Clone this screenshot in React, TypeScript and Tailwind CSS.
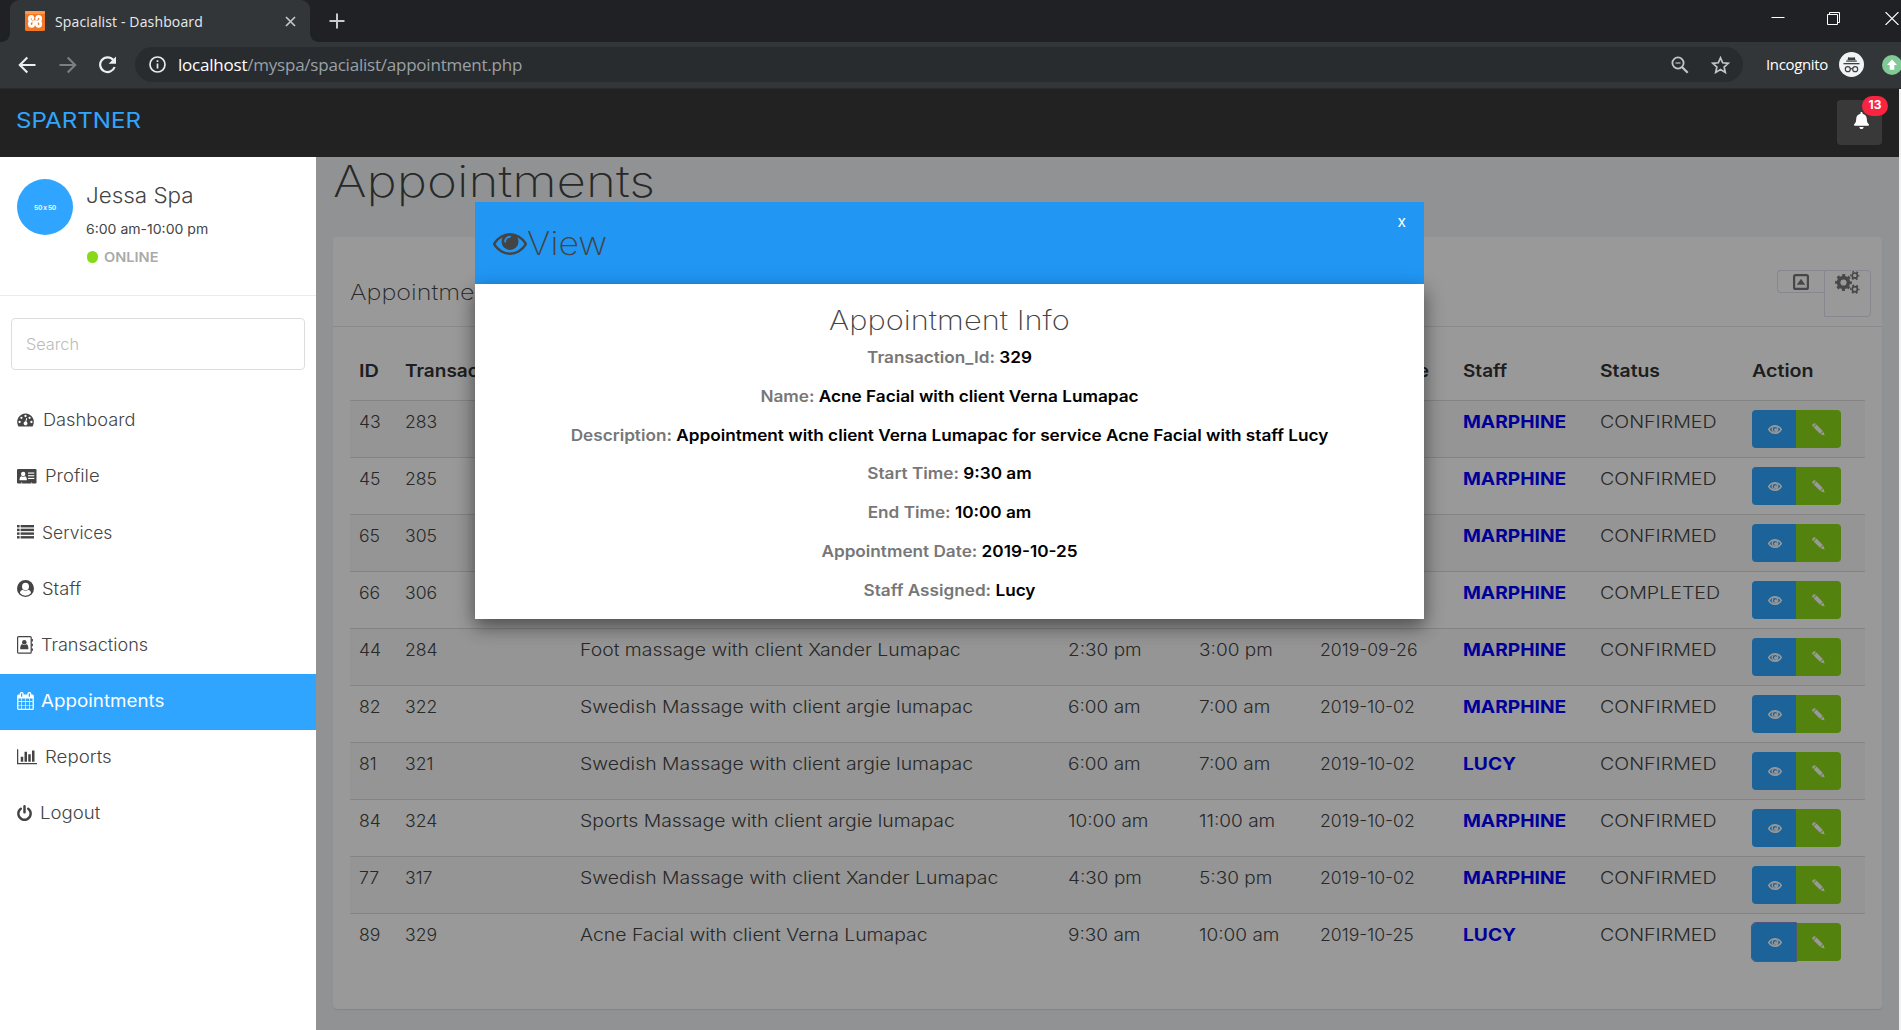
import type { ReactNode } from 'react';
import { FaBell } from 'react-icons/fa';

type Row = {
  id: string;
  trans: string;
  name?: string;
  start?: string;
  end?: string;
  date?: string;
  staff: string;
  status: string;
};

const rows: Row[] = [
  { id: '43', trans: '283', staff: 'MARPHINE', status: 'CONFIRMED' },
  { id: '45', trans: '285', staff: 'MARPHINE', status: 'CONFIRMED' },
  { id: '65', trans: '305', staff: 'MARPHINE', status: 'CONFIRMED' },
  { id: '66', trans: '306', staff: 'MARPHINE', status: 'COMPLETED' },
  { id: '44', trans: '284', name: 'Foot massage with client Xander Lumapac', start: '2:30 pm', end: '3:00 pm', date: '2019-09-26', staff: 'MARPHINE', status: 'CONFIRMED' },
  { id: '82', trans: '322', name: 'Swedish Massage with client argie lumapac', start: '6:00 am', end: '7:00 am', date: '2019-10-02', staff: 'MARPHINE', status: 'CONFIRMED' },
  { id: '81', trans: '321', name: 'Swedish Massage with client argie lumapac', start: '6:00 am', end: '7:00 am', date: '2019-10-02', staff: 'LUCY', status: 'CONFIRMED' },
  { id: '84', trans: '324', name: 'Sports Massage with client argie lumapac', start: '10:00 am', end: '11:00 am', date: '2019-10-02', staff: 'MARPHINE', status: 'CONFIRMED' },
  { id: '77', trans: '317', name: 'Swedish Massage with client Xander Lumapac', start: '4:30 pm', end: '5:30 pm', date: '2019-10-02', staff: 'MARPHINE', status: 'CONFIRMED' },
  { id: '89', trans: '329', name: 'Acne Facial with client Verna Lumapac', start: '9:30 am', end: '10:00 am', date: '2019-10-25', staff: 'LUCY', status: 'CONFIRMED' },
];

const details: [string, string][] = [
  ['Transaction_Id:', '329'],
  ['Name:', 'Acne Facial with client Verna Lumapac'],
  ['Description:', 'Appointment with client Verna Lumapac for service Acne Facial with staff Lucy'],
  ['Start Time:', '9:30 am'],
  ['End Time:', '10:00 am'],
  ['Appointment Date:', '2019-10-25'],
  ['Staff Assigned:', 'Lucy'],
];

const GRID = 'grid grid-cols-[46px_174.5px_488.5px_131px_121px_142.5px_137.5px_152px_113px] pl-[9px]';

function DashboardIcon() {
  return (
    <svg width="17" height="14" viewBox="0 0 17 14">
      <path fill="currentColor" d="M8.5 .5A8.5 8.5 0 0 0 1.3 13.2q.2.4.7.4h13q.5 0 .7-.4A8.5 8.5 0 0 0 8.500.5z" />
      <g fill="#fff">
        <circle cx="2.6" cy="9" r="1.15" />
        <circle cx="4.4" cy="4.8" r="1.15" />
        <circle cx="8.500" cy="3" r="1.15" />
        <circle cx="12.6" cy="4.800" r="1.15" />
        <circle cx="14.4" cy="9" r="1.15" />
        <path d="M9.300 4.900l.9.2-.8 3.700a1.900 1.900 0 1 1-1.100-.2z" />
      </g>
    </svg>
  );
}
function CardIcon() {
  return (
    <svg width="20" height="15" viewBox="0 0 20 15">
      <rect width="19.500" height="14.500" rx="1.300" fill="currentColor" />
      <g fill="#fff">
        <circle cx="6.200" cy="5" r="2.200" />
        <path d="M2.500 11.300c0-2.900 1-4.100 2-4.100q1.700 1.300 3.400 0c1 0 2 1.200 2 4.100z" />
        <rect x="11" y="3.500" width="6.300" height="1.100" />
        <rect x="11" y="6.200" width="6.300" height="1.100" />
        <rect x="11" y="8.900" width="6.300" height="1.100" />
        <rect x="4" y="13.600" width="1.200" height=".9" />
        <rect x="14" y="13.600" width="1.200" height=".9" />
      </g>
    </svg>
  );
}
function ListIcon() {
  return (
    <svg width="17" height="14" viewBox="0 0 17 14" fill="currentColor">
      {[0, 3.7, 7.4, 11.1].map((y) => (
        <g key={y}>
          <rect x="0" y={y} width="2.600" height="2.4" />
          <rect x="3.600" y={y} width="13.400" height="2.4" />
        </g>
      ))}
    </svg>
  );
}
function UserIcon() {
  return (
    <svg width="17" height="17" viewBox="0 0 17 17">
      <circle cx="8.500" cy="8.500" r="8.500" fill="currentColor" />
      <path fill="#fff" d="M2.900 13.100c.4-2 1.300-3.100 2.700-3.400q2.900 2.300 5.800 0c1.400.3 2.300 1.400 2.700 3.400a7.200 7.200 0 0 1-11.200 0z" />
      <ellipse cx="8.500" cy="6.500" rx="3.500" ry="3.800" fill="#fff" />
    </svg>
  );
}
function AddressBookIcon() {
  return (
    <svg width="16" height="18" viewBox="0 0 16 18">
      <rect x=".6" y=".6" width="13.600" height="16.600" rx="1" fill="none" stroke="currentColor" strokeWidth="1.200" />
      <g fill="currentColor">
        <circle cx="7.300" cy="6.300" r="2.300" />
        <path d="M3.200 13.200c0-3.400.8-5 2-5q2 1.400 4.200 0c1.200 0 2 1.600 2 5z" />
        <rect x="14.400" y="3" width="1.500" height="2.500" />
        <rect x="14.400" y="7.700" width="1.500" height="2.500" />
        <rect x="14.400" y="12.400" width="1.500" height="2.500" />
      </g>
    </svg>
  );
}
function CalendarIcon() {
  return (
    <svg width="17" height="18" viewBox="64 0 1664 1792" fill="currentColor">
      <path d="M192 1664h288v-288h-288v288zm352 0h320v-288h-320v288zm-352-352h288v-320h-288v320zm352 0h320v-320h-320v320zm-352-384h288v-288h-288v288zm736 736h320v-288h-320v288zm-384-736h320v-288h-320v288zm768 736h288v-288h-288v288zm-384-352h320v-320h-320v320zm-352-864v-288q0-13-9.500-22.500t-22.500-9.500h-64q-13 0-22.500 9.500t-9.500 22.500v288q0 13 9.500 22.500t22.500 9.500h64q13 0 22.500-9.500t9.500-22.500zm736 864h288v-320h-288v320zm-384-384h320v-288h-320v288zm384 0h288v-288h-288v288zm32-480v-288q0-13-9.500-22.500t-22.500-9.500h-64q-13 0-22.500 9.500t-9.500 22.500v288q0 13 9.500 22.500t22.500 9.500h64q13 0 22.500-9.500t9.500-22.500zm384-64v1280q0 52-38 90t-90 38h-1408q-52 0-90-38t-38-90v-1280q0-52 38-90t90-38h128v-96q0-66 47-113t113-47h64q66 0 113 47t47 113v96h384v-96q0-66 47-113t113-47h64q66 0 113 47t47 113v96h128q52 0 90 38t38 90z" />
    </svg>
  );
}
function ChartIcon() {
  return (
    <svg width="20" height="17.500" viewBox="0 0 2048 1792" fill="currentColor">
      <path d="M640 896v512h-256v-512h256zm384-512v1024h-256v-1024h256zm1024 1152v128h-2048v-1536h128v1408h1920zm-640-896v768h-256v-768h256zm384-384v1152h-256v-1152h256z" />
    </svg>
  );
}
function PowerIcon() {
  return (
    <svg width="15" height="16" viewBox="128 0 1536 1664" fill="currentColor">
      <path d="M1664 896q0 156-61 298t-164 245-245 164-298 61-298-61-245-164-164-245-61-298q0-182 80.500-343t226.500-270q43-32 95.500-25t83.500 50q32 42 24.500 94.500t-49.500 84.500q-98 74-151.500 181t-53.500 228q0 104 40.500 198.500t109.500 163.500 163.500 109.500 198.500 40.500 198.500-40.500 163.500-109.500 109.500-163.500 40.500-198.500q0-121-53.500-228t-151.500-181q-42-32-49.500-84.500t24.500-94.500q31-43 84-50t95 25q146 109 226.500 270t80.500 343zm-640-768v640q0 52-38 90t-90 38-90-38-38-90v-640q0-52 38-90t90-38 90 38 38 90z" />
    </svg>
  );
}
function EyeIcon({ className }: { className: string }) {
  return (
    <svg className={className} viewBox="0 384 1792 1152" fill="currentColor">
      <path d="M1664 960q-152-236-381-353 61 104 61 225 0 185-131.500 316.500t-316.500 131.500-316.500-131.500-131.500-316.500q0-121 61-225-229 117-381 353 133 205 333.500 326.500t434.500 121.500 434.500-121.500 333.500-326.500zm-720-384q0-20-14-34t-34-14q-125 0-214.500 89.500t-89.500 214.500q0 20 14 34t34 14 34-14 14-34q0-86 61-147t147-61q20 0 34-14t14-34zm848 384q0 34-20 69-140 230-376.500 368.500t-499.500 138.500-499.500-139-376.500-368q-20-35-20-69t20-69q140-229 376.500-368t499.500-139 499.500 139 376.500 368q20 35 20 69z" />
    </svg>
  );
}
function SmallEye() {
  return (
    <svg width="14" height="9" viewBox="0 0 14 9" fill="none" stroke="#fff">
      <path strokeWidth="1.400" d="M.7 4.500C2.300 2 4.500.7 7 .7s4.700 1.300 6.300 3.800C11.700 7 9.500 8.300 7 8.300S2.300 7 .7 4.500z" />
      <circle cx="7" cy="4.300" r="2.800" strokeWidth="1.200" />
      <circle cx="7.600" cy="4.800" r="1.500" fill="#fff" stroke="none" />
    </svg>
  );
}
function SmallPencil() {
  return (
    <svg width="13" height="13" viewBox="0 0 13 13" fill="#fff">
      <path d="M.5 3.200Q-.1 2.500.5 1.600L1.600.5q.9-.6 1.700 0l.6.600L1.200 3.900zM1.700 4.400l2.800-2.800 6.300 6.300-2.800 2.800zM8.500 11.200l2.800-2.800 1.400 4.200z" />
    </svg>
  );
}
function CogsIcon() {
  return (
    <svg width="25" height="23" viewBox="0 0 25 23" fill="none" stroke="currentColor">
      <circle cx="8.500" cy="11.500" r="4.900" strokeWidth="3.600" />
      <circle cx="8.500" cy="11.500" r="7.300" strokeWidth="2.200" strokeDasharray="3 2.733" strokeDashoffset="1.500" />
      {[4.6, 18.2].map((cy) => (
        <g key={cy}>
          <circle cx="19.800" cy={cy} r="2.600" strokeWidth="1.700" />
          <circle cx="19.800" cy={cy} r="4" strokeWidth="1.400" strokeDasharray="1.900 2.289" strokeDashoffset="1" />
        </g>
      ))}
    </svg>
  );
}

const menu: { label: string; icon: ReactNode; gap: string; fit: string; active?: boolean }[] = [
  { label: 'Dashboard', icon: <DashboardIcon />, gap: 'gap-[9px]', fit: 'scale-x-[1.054]' },
  { label: 'Profile', icon: <CardIcon />, gap: 'gap-[8px]', fit: 'scale-x-[1.07]' },
  { label: 'Services', icon: <ListIcon />, gap: 'gap-[8px]', fit: 'scale-x-[1.01]' },
  { label: 'Staff', icon: <UserIcon />, gap: 'gap-[8px]', fit: 'scale-x-[1.06]' },
  { label: 'Transactions', icon: <AddressBookIcon />, gap: 'gap-[8px]', fit: 'scale-x-[1.045]' },
  { label: 'Appointments', icon: <CalendarIcon />, gap: 'gap-[7px]', fit: 'scale-x-[1.088]', active: true },
  { label: 'Reports', icon: <ChartIcon />, gap: 'gap-[8px]', fit: 'scale-x-[1.08]' },
  { label: 'Logout', icon: <PowerIcon />, gap: 'gap-[8px]', fit: 'scale-x-[1.075]' },
];

function BrowserChrome() {
  return (
    <div className="font-['Open_Sans',sans-serif]">
      <div className="flex h-[42px] justify-between bg-[#202124]">
        <div className="flex pl-[10px]">
          <div className="relative flex w-[300px] items-center rounded-t-[9px] bg-[#323639] pr-[14px] pl-[15px]">
            <div className="absolute bottom-0 -left-2 h-2 w-2 bg-[radial-gradient(circle_at_0_0,transparent_7.5px,#323639_8px)]" />
            <div className="absolute -right-2 bottom-0 h-2 w-2 bg-[radial-gradient(circle_at_100%_0,transparent_7.5px,#323639_8px)]" />
            <svg width="20" height="20" viewBox="0 0 20 20">
              <rect width="20" height="20" rx="1.500" fill="#f37623" />
              <rect width="20" height="3" rx="1" fill="#fb9a4f" />
              <g fill="none" stroke="#fff" strokeWidth="2.800" strokeLinecap="round" strokeLinejoin="round">
                <path d="M7.800 7.800Q8.300 5.300 6.300 5.300 4.300 5.300 4.300 7.600T6 10.300q-1.700.6-1.700 2.800t2.300 2.200q2.200 0 2.200-2.300v-2.300h2.600V13q0 2.300 2.200 2.300 2.200 0 2.200-2.300T14 10.300q1.700-.6 1.700-2.800t-2-2.200q-2 0-2.100 2.500" />
              </g>
            </svg>
            <span className="ml-[10px] flex-1 text-[14px] tracking-[0.14px] whitespace-nowrap text-[#e8eaed]">Spacialist - Dashboard</span>
            <svg width="11" height="11" viewBox="0 0 11 11" stroke="#c4c7ca" strokeWidth="1.700">
              <path d="M1 1l9 9M10 1l-9 9" />
            </svg>
          </div>
          <svg className="mt-[13px] ml-[19px]" width="16" height="16" viewBox="0 0 16 16" stroke="#c8cbce" strokeWidth="2">
            <path d="M8 .5v15M.5 8h15" />
          </svg>
        </div>
        <div className="flex pt-[12px] pr-[2px]">
          <svg width="14" height="13" viewBox="0 0 14 13" stroke="#fff">
            <path d="M.5 5.500h13" />
          </svg>
          <svg className="ml-[42px]" width="14" height="13" viewBox="0 0 14 13" fill="none" stroke="#fff">
            <path d="M.5 2.500h10v10h-10zM2.500 2.500v-2h10v10h-2" />
          </svg>
          <svg className="ml-[44px]" width="14" height="13" viewBox="0 0 14 13" stroke="#fff" strokeWidth="1.100">
            <path d="M.5 0l13 13M13.500 0l-13 13" />
          </svg>
        </div>
      </div>
      <div className="flex h-[47px] items-center overflow-hidden border-b border-[#292a2b] bg-[#323639] pb-[1px] pl-[18px]">
        <svg className="shrink-0" width="18" height="18" viewBox="0 0 18 18" fill="none" stroke="#eceef0" strokeWidth="2.100">
          <path d="M17.500 9H2M9.300 1.500L1.800 9l7.500 7.500" />
        </svg>
        <svg className="ml-[23px] shrink-0" width="18" height="18" viewBox="0 0 18 18" fill="none" stroke="#7c7f82" strokeWidth="2.100">
          <path d="M.5 9H16M8.700 1.500L16.200 9l-7.500 7.500" />
        </svg>
        <svg className="ml-[21px] shrink-0" width="19" height="18" viewBox="0 0 19 18" fill="none" stroke="#eceef0" strokeWidth="2.200">
          <path d="M15.300 4A7.400 7.400 0 1 0 16.600 11" />
          <path d="M18 .4v7.400h-7.400z" fill="#eceef0" stroke="none" />
        </svg>
        <div className="ml-[18px] flex h-[35px] w-[1608px] shrink-0 items-center rounded-full bg-[#282c2f] pr-[13px] pl-[14px]">
          <svg width="17" height="17" viewBox="0 0 17 17" fill="none" stroke="#e8eaed" strokeWidth="1.700">
            <circle cx="8.500" cy="8.500" r="7.500" />
            <path d="M8.500 7.500v5M8.500 4.300v1.800" />
          </svg>
          <div className="ml-[12px] flex-1 text-[17px] tracking-[-0.22px] whitespace-nowrap text-[#9aa0a6]">
            <span className="text-white">localhost</span>/myspa/spacialist/appointment.php
          </div>
          <svg className="mr-[22px]" width="18" height="18" viewBox="0 0 18 18" fill="none" stroke="#c3c5c7" strokeWidth="1.800">
            <circle cx="7" cy="7" r="5.600" />
            <path d="M11 11l5.700 5.700" strokeWidth="2.200" />
            <path d="M4.500 7h5" strokeWidth="1.200" />
          </svg>
          <svg width="19" height="18" viewBox="0 0 19 18" fill="none" stroke="#c3c5c7" strokeWidth="1.700">
            <path d="M9.500 1.800l2.200 5 5.500.5-4.100 3.700 1.200 5.400-4.800-2.900-4.800 2.900 1.200-5.400L1.800 7.300l5.500-.5z" />
          </svg>
        </div>
        <span className="ml-[23px] text-[15px] tracking-[-0.35px] text-white">Incognito</span>
        <svg className="ml-[11px] shrink-0" width="25" height="25" viewBox="0 0 25 25">
          <circle cx="12.500" cy="12.500" r="12.500" fill="#f1f3f4" />
          <g fill="#3c4043">
            <path d="M9.300 5q1.200.5 1.700.5h3q.5 0 1.700-.5l.9 3.200H8.400z" />
            <rect x="7.200" y="8.500" width="10.600" height="1.200" />
            <rect x="4.500" y="11" width="16" height="1.300" />
          </g>
          <g fill="none" stroke="#3c4043" strokeWidth="1.200">
            <circle cx="8.800" cy="17.200" r="2.500" />
            <circle cx="16.200" cy="17.200" r="2.500" />
            <path d="M11.300 17q1.200-.7 2.400 0" />
          </g>
        </svg>
        <svg className="ml-[18px] shrink-0" width="20" height="20" viewBox="0 0 20 20">
          <circle cx="10" cy="10" r="10" fill="#81c995" />
          <path fill="#fff" d="M10 4.500l5 5.500h-2.700v4.800H7.700V10H5z" />
        </svg>
      </div>
    </div>
  );
}

function Sidebar() {
  return (
    <aside className="flex w-[316px] shrink-0 flex-col bg-white text-[#444]">
      <div className="flex h-[139px] border-b border-[#e9ecf2] pt-[22px] pl-[17px]">
        <div className="flex h-14 w-14 items-center justify-center rounded-full bg-[#30a5ff] pt-[3px] text-[6.500px] leading-none font-bold tracking-[-0.3px] text-white/90">
          50 x 50
        </div>
        <div className="ml-[13px]">
          <div className="h-[32px] origin-left scale-x-[1.052] text-[21.3px] leading-8 font-light whitespace-nowrap">Jessa Spa</div>
          <div className="mt-[8px] origin-left scale-x-[1.04] text-[13.5px] leading-5">6:00 am-10:00 pm</div>
          <div className="mt-[8px] flex h-5 items-center text-[13.5px] font-semibold text-[#aaa]">
            <span className="mr-[6px] ml-[1px] h-[12px] w-[11px] rounded-full bg-[#8ad919]" />
            <span className="mt-[1px] origin-left scale-x-[1.08]">ONLINE</span>
          </div>
        </div>
      </div>
      <div className="mx-[11px] mt-[22px] flex h-[52px] items-center rounded-[4px] border border-[#ddd] pt-[2px] pl-[14px] text-[15.4px] font-light text-[#bbb]">
        <span className="origin-left scale-x-[1.056]">Search</span>
      </div>
      <nav className="mt-[23px]">
        {menu.map((m) => (
          <div
            key={m.label}
            className={`flex h-[56.200px] items-center pb-[2px] pl-[17px] text-[17.3px] ${m.gap} ${m.active ? 'bg-[#30a5ff] font-normal text-white' : 'font-light'}`}
          >
            {m.icon}
            <span className={`origin-left ${m.fit}`}>{m.label}</span>
          </div>
        ))}
      </nav>
    </aside>
  );
}

function AppointmentTable() {
  return (
    <div className="mx-[17px] text-[17.3px] leading-6 font-light whitespace-nowrap text-[#444]">
      <div className={`${GRID} h-[73px] items-center pt-[14px] font-semibold text-[#333]`}>
        <span className="origin-left scale-x-[1.150]">ID</span>
        <span className="origin-left scale-x-[1.100]">Transaction Id</span>
        <span className="col-start-6 w-[109px] origin-right scale-x-[1.100] text-right">Date</span>
        <span className="origin-left scale-x-[1.100]">Staff</span>
        <span className="origin-left scale-x-[1.120]">Status</span>
        <span className="origin-left scale-x-[1.140]">Action</span>
      </div>
      {rows.map((r, i) => (
        <div key={r.id} className={`${GRID} h-[57px] border-t border-[#ddd] pt-[9px] ${i % 2 === 0 ? 'bg-[#f9f9f9]' : ''}`}>
          <span className="origin-left scale-x-[1.02]">{r.id}</span>
          <span className="origin-left scale-x-[1.02]">{r.trans}</span>
          <span className="origin-left scale-x-[1.122]">{r.name}</span>
          <span className="origin-left scale-x-[1.1]">{r.start}</span>
          <span className="origin-left scale-x-[1.1]">{r.end}</span>
          <span className="origin-left scale-x-[1.02]">{r.date}</span>
          <span className="origin-left scale-x-[1.11] font-bold text-[#0000ff]">{r.staff}</span>
          <span className="origin-left scale-x-[1.135]">{r.status}</span>
          <span className="flex h-[38px] w-[89px] text-white">
            <span
              className={`flex w-[44px] items-center justify-center rounded-l-[4px] bg-[#30a5ff] pl-[2px] ${i === rows.length - 1 ? 'z-10 outline-1 outline-[#7d8fd8]' : ''}`}
            >
              <SmallEye />
            </span>
            <span className="flex w-[45px] items-center justify-center rounded-r-[4px] bg-[#8ad919]">
              <SmallPencil />
            </span>
          </span>
        </div>
      ))}
    </div>
  );
}

function Modal() {
  return (
    <div className="absolute top-[202px] left-[475px] w-[949px]">
      <div className="flex h-[82px] items-start justify-between bg-[#2196f3] pr-[18px] pl-[18px] text-[#444]">
        <div className="flex items-center pt-[21px]">
          <EyeIcon className="mt-[1px] h-[22px] w-[34px]" />
          <span className="origin-left scale-x-[1.080] text-[33px] leading-[40px] font-extralight">View</span>
        </div>
        <span className="pt-[10px] text-[15.500px] leading-5 text-white">x</span>
      </div>
      <div className="h-[335px] bg-white pt-[17px] text-center shadow-[0_8px_16px_0_rgba(0,0,0,0.3),0_6px_20px_0_rgba(0,0,0,0.26)]">
        <h2 className="h-[40px] scale-x-[1.141] text-[27px] leading-[40px] font-extralight text-[#444]">Appointment Info</h2>
        {details.map(([k, v]) => (
          <p key={k} className="h-[38.800px] scale-x-[1.074] text-[16px] leading-8 font-semibold text-black">
            <span className="text-[#777]">{k}</span> {v}
          </p>
        ))}
      </div>
    </div>
  );
}

export default function App() {
  return (
    <div className="relative flex h-[1030px] w-[1901px] flex-col overflow-hidden bg-[#f1f1f1] font-['Inter',sans-serif]">
      <BrowserChrome />
      <div className="flex w-[1899px] flex-1 flex-col">
        <header className="flex h-[68px] shrink-0 items-start justify-between bg-[#222] pr-[17px] pl-[16px]">
          <span className="mt-[15px] origin-left scale-x-[1.112] text-[21.700px] leading-8 text-[#30a5ff]">SPARTNER</span>
          <div className="relative mt-[11px] flex h-[45px] w-[45px] justify-center rounded-[4px] bg-[#393939] pt-[12px] pl-[3px] text-white">
            <FaBell size={17} />
            <span className="absolute -top-[4px] left-[25px] flex h-[20px] w-[26px] items-center justify-center rounded-full bg-[#f9243f] pb-[3px] text-[12px] font-bold">
              13
            </span>
          </div>
        </header>
        <div className="flex flex-1">
          <Sidebar />
          <main className="relative w-[1583px] bg-[#f1f4f7] px-[17px]">
            <h1 className="h-[80px] origin-left scale-x-[1.175] text-[43.500px] leading-[48px] font-[250] text-[#444]">Appointments</h1>
            <section className="h-[772px] rounded-[4px] bg-white shadow-[0_1px_1px_rgba(0,0,0,0.1)]">
              <div className="flex h-[90px] items-start justify-between border-b border-[#e6e7ec] pr-[11px] pl-[17px] text-[#444]">
                <span className="mt-[39px] origin-left scale-x-[1.160] text-[21.700px] leading-8 font-[250]">Appointments</span>
                <div className="mt-[33px] flex items-start text-[#777]">
                  <span className="flex h-[23px] w-[47px] items-center justify-center rounded-l-[4px] border border-r-0 border-[#e0e2ee]">
                    <svg width="16" height="16" viewBox="0 0 16 16">
                      <rect x="1.100" y="1.100" width="13.800" height="13.800" rx="1.500" fill="none" stroke="currentColor" strokeWidth="2.200" />
                      <path fill="currentColor" d="M8 4.700l4.200 6H3.800z" />
                    </svg>
                  </span>
                  <span className="flex h-[47px] w-[47px] items-start justify-center rounded-r-[4px] rounded-bl-[1px] border border-[#e0e2ee]">
                    <CogsIcon />
                  </span>
                </div>
              </div>
              <AppointmentTable />
            </section>
            <div className="absolute inset-0 z-20 bg-black/40" />
          </main>
        </div>
      </div>
      <div className="absolute inset-0 z-30">
        <Modal />
      </div>
    </div>
  );
}
